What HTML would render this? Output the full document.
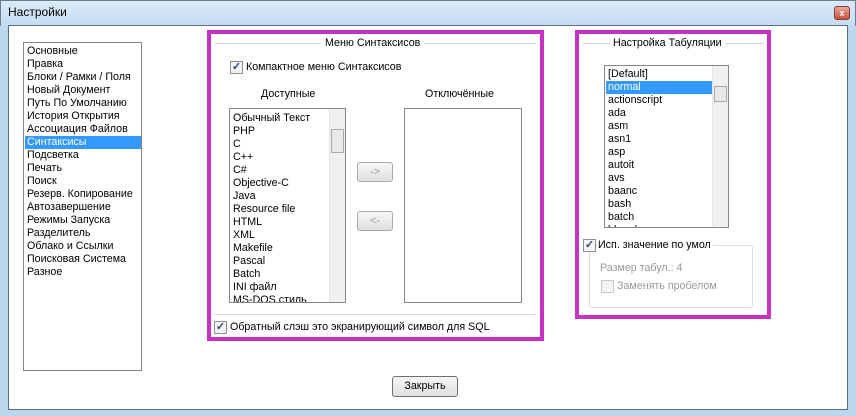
<!DOCTYPE html>
<html><head><meta charset="utf-8"><style>
*{margin:0;padding:0;box-sizing:border-box}
body{width:856px;height:416px;background:#bcd6ee;font-family:"Liberation Sans",sans-serif;font-size:10.7px;color:#000;position:relative;overflow:hidden}
.a{position:absolute}
.title{left:0;top:0;width:856px;height:26px;background:linear-gradient(#dbeaf8,#c4dcf2);border:1px solid #6b7f93;border-bottom:none}
.client{left:8px;top:25px;width:840px;height:385px;background:#fff;border:1px solid #5a6c80}
.list{background:#fff;border:1px solid #828790}
.it{position:absolute;left:3px;white-space:nowrap;line-height:13px}
.sel{background:#3399ff;color:#fff}
.mag{border:4px solid #c832c2}
.sb{position:absolute;top:0;right:0;width:16px;height:100%;background:#f0f0f0;border-left:1px solid #e4e4e4}
.btn{border:1px solid #aaa;border-radius:3px;background:linear-gradient(#f6f6f6,#e0e0e0);text-align:center;line-height:18px}
.cb{width:13px;height:13px;border:1px solid #8e8f8f;background:#f4f4f4;font-size:11px;line-height:11px;text-align:center;color:#2a3f8f;font-weight:bold}
.line{height:1px;background:#d8d8d8}
</style></head><body>
<div class="a title"></div>
<div class="a" style="left:8px;top:5px;font-size:12px">Настройки</div>
<div class="a" style="left:834px;top:6px;width:16px;height:14px;background:linear-gradient(#e8a89a,#c7503c);border:1px solid #8a3a2c;border-radius:3px;color:#fff;font-size:9px;text-align:center;line-height:12px;font-weight:bold">x</div>
<div class="a client"></div>

<div class="a list" style="left:23px;top:42px;width:119px;height:329px">
<div class="it" style="top:2px">Основные</div>
<div class="it" style="top:15px">Правка</div>
<div class="it" style="top:28px">Блоки / Рамки / Поля</div>
<div class="it" style="top:41px">Новый Документ</div>
<div class="it" style="top:54px">Путь По Умолчанию</div>
<div class="it" style="top:67px">История Открытия</div>
<div class="it" style="top:80px">Ассоциация Файлов</div>
<div class="it sel" style="top:93px;left:1px;width:116px;padding-left:2px">Синтаксисы</div>
<div class="it" style="top:106px">Подсветка</div>
<div class="it" style="top:119px">Печать</div>
<div class="it" style="top:132px">Поиск</div>
<div class="it" style="top:145px">Резерв. Копирование</div>
<div class="it" style="top:158px">Автозавершение</div>
<div class="it" style="top:171px">Режимы Запуска</div>
<div class="it" style="top:184px">Разделитель</div>
<div class="it" style="top:197px">Облако и Ссылки</div>
<div class="it" style="top:210px">Поисковая Система</div>
<div class="it" style="top:223px">Разное</div>
</div>

<div class="a mag" style="left:207px;top:30px;width:337px;height:311px"></div>
<div class="a line" style="left:214px;top:43px;width:323px"></div>
<div class="a" style="left:321px;top:37px;background:#fff;padding:0 4px">Меню Синтаксисов</div>
<div class="a cb" style="left:230px;top:61px">✓</div>
<div class="a" style="left:246px;top:61px">Компактное меню Синтаксисов</div>
<div class="a" style="left:261px;top:88px">Доступные</div>
<div class="a" style="left:425px;top:88px">Отключённые</div>
<div class="a list" style="left:229px;top:108px;width:117px;height:195px;overflow:hidden">
<div class="it" style="top:3px">Обычный Текст</div>
<div class="it" style="top:16px">PHP</div>
<div class="it" style="top:29px">C</div>
<div class="it" style="top:42px">C++</div>
<div class="it" style="top:55px">C#</div>
<div class="it" style="top:68px">Objective-C</div>
<div class="it" style="top:81px">Java</div>
<div class="it" style="top:94px">Resource file</div>
<div class="it" style="top:107px">HTML</div>
<div class="it" style="top:120px">XML</div>
<div class="it" style="top:133px">Makefile</div>
<div class="it" style="top:146px">Pascal</div>
<div class="it" style="top:159px">Batch</div>
<div class="it" style="top:172px">INI файл</div>
<div class="it" style="top:185px">MS-DOS стиль</div>
<div class="sb"><div style="position:absolute;left:1px;top:20px;width:13px;height:24px;border:1px solid #aaa;background:#e8e8e8"></div></div>
</div>
<div class="a list" style="left:404px;top:108px;width:118px;height:195px"></div>
<div class="a btn" style="left:357px;top:162px;width:36px;height:20px;color:#999">-&gt;</div>
<div class="a btn" style="left:357px;top:211px;width:36px;height:20px;color:#999">&lt;-</div>
<div class="a line" style="left:214px;top:314px;width:323px"></div>
<div class="a cb" style="left:214px;top:321px">✓</div>
<div class="a" style="left:230px;top:321px">Обратный слэш это экранирующий символ для SQL</div>

<div class="a mag" style="left:575px;top:30px;width:196px;height:289px"></div>
<div class="a line" style="left:582px;top:43px;width:182px"></div>
<div class="a" style="left:610px;top:37px;background:#fff;padding:0 3px">Настройка Табуляции</div>
<div class="a list" style="left:604px;top:65px;width:125px;height:163px;overflow:hidden">
<div class="it" style="top:2px">[Default]</div>
<div class="it sel" style="top:15px;left:1px;width:106px;padding-left:2px">normal</div>
<div class="it" style="top:28px">actionscript</div>
<div class="it" style="top:41px">ada</div>
<div class="it" style="top:54px">asm</div>
<div class="it" style="top:67px">asn1</div>
<div class="it" style="top:80px">asp</div>
<div class="it" style="top:93px">autoit</div>
<div class="it" style="top:106px">avs</div>
<div class="it" style="top:119px">baanc</div>
<div class="it" style="top:132px">bash</div>
<div class="it" style="top:145px">batch</div>
<div class="it" style="top:158px">bbcode</div>
<div class="sb"><div style="position:absolute;left:1px;top:20px;width:13px;height:16px;border:1px solid #aaa;background:#e8e8e8"></div></div>
</div>
<div class="a" style="left:589px;top:245px;width:164px;height:63px;border:1px solid #dcdcdc;border-radius:3px"></div>
<div class="a cb" style="left:583px;top:239px">✓</div>
<div class="a" style="left:598px;top:239px;background:#fff;padding-right:2px">Исп. значение по умол</div>
<div class="a" style="left:600px;top:262px;color:#999">Размер табул.: 4</div>
<div class="a cb" style="left:601px;top:280px;border-color:#c8c8c8"></div>
<div class="a" style="left:617px;top:280px;color:#999">Заменять пробелом</div>

<div class="a btn" style="left:392px;top:376px;width:66px;height:21px;border-color:#707070;line-height:19px">Закрыть</div>
</body></html>
